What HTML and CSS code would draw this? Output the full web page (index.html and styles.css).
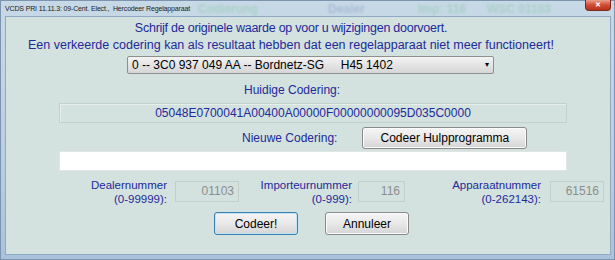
FILE: index.html
```html
<!DOCTYPE html>
<html lang="nl">
  <head>
    <meta charset="UTF-8" />
    <title>Hercodeer Regelapparaat</title>
    <link rel="stylesheet" href="styles.css">
  </head>
  <body>
    <!-- venster -->
    <div class="win">
      <!-- titelbalk -->
      <div class="titlebar">
        <span class="title">VCDS PRI 11.11.3: 09-Cent. Elect.,&nbsp; Hercodeer Regelapparaat</span>
        <span class="ghost g1">Codierung</span>
        <span class="ghost g2">Dealer</span>
        <span class="ghost g3">Imp: 116</span>
        <span class="ghost g4">WSC 01103</span>
        <span class="close">&#x2715;</span>
      </div>

      <!-- inhoud -->
      <div class="client">
        <p class="msg m1">Schrijf de originele waarde op voor u wijzigingen doorvoert.</p>
        <p class="msg m2">Een verkeerde codering kan als resultaat hebben dat een regelapparaat niet meer functioneert!</p>

        <div class="select">
          <span>0 -- 3C0 937 049 AA -- Bordnetz-SG&nbsp;&nbsp;&nbsp;&nbsp; H45 1402</span>
          <span class="arrow">&#9662;</span>
        </div>

        <p class="lbl cur">Huidige Codering:</p>
        <div class="codebox">05048E0700041A00400A00000F00000000095D035C0000</div>

        <div class="newrow">
          <span class="lbl">Nieuwe Codering:</span>
          <button class="btn helper">Codeer Hulpprogramma</button>
        </div>
        <div class="input"></div>

        <!-- nummers -->
        <div class="nums">
          <div class="num dealer">
            <span class="lbl">Dealernummer<br>(0-99999):</span>
            <span class="val v1">01103</span>
          </div>
          <div class="num imp">
            <span class="lbl">Importeurnummer<br>(0-999):</span>
            <span class="val v2">116</span>
          </div>
          <div class="num app">
            <span class="lbl">Apparaatnummer<br>(0-262143):</span>
            <span class="val v3">61516</span>
          </div>
        </div>

        <div class="actions">
          <button class="btn ok">Codeer!</button>
          <button class="btn cancel">Annuleer</button>
        </div>
      </div>
    </div>
  </body>
</html>
```

FILE: styles.css
```css
html,
body {
  margin: 0;
  padding: 0;
  overflow: hidden;
}
body {
  width: 615px;
  height: 260px;
  font-family: "Liberation Sans", Arial, sans-serif;
}

/* venster (glas) */
.win {
  width: 615px;
  height: 260px;
  box-sizing: border-box;
  background: linear-gradient(to bottom, #c7d9e6, #b9cfe2 60%, #a9c3dc);
  border: 1px solid #7d94ae;
  padding: 0 3px 4px 4px;
  display: flex;
  flex-direction: column;
}

/* titelbalk */
.titlebar {
  position: relative;
  height: 15px;
  display: flex;
  align-items: flex-start;
}
.title {
  font-size: 7px;
  letter-spacing: -0.15px;
  color: #1b1b1b;
  padding-top: 4px;
  position: relative;
  z-index: 1;
}
/* vage tekst achter het glas */
.ghost {
  position: absolute;
  top: 1px;
  font-size: 12px;
  font-weight: bold;
  color: #8cc6a8;
  opacity: 0.5;
  filter: blur(0.8px);
}
.g1 { left: 193px; }
.g2 { left: 323px; color: #8aa0c8; }
.g3 { left: 413px; }
.g4 { left: 482px; }
.close {
  margin-left: auto;
  width: 26px;
  height: 11px;
  margin-top: -1px;
  box-sizing: border-box;
  border: 1px solid #7a2a20;
  border-top: 0;
  border-radius: 0 0 4px 4px;
  background: linear-gradient(to bottom, #e8a08e, #cf4b33 50%, #b8321c);
  color: #fff;
  font-size: 7px;
  font-weight: bold;
  text-align: center;
  line-height: 10px;
}

/* inhoudsvlak */
.client {
  flex: 1;
  background: #d3e1df;
  border: 1px solid #8fa9c6;
  color: #222a9a;
  font-size: 12px;
}
.client p {
  margin: 0;
}
.msg {
  font-size: 12.5px;
  line-height: 17px;
  text-align: center;
  width: 570px;
}
.m1 {
  margin-top: 3px !important;
  letter-spacing: -0.25px;
}

/* keuzelijst */
.select {
  margin: 2px 0 0 121px;
  width: 367px;
  height: 18px;
  box-sizing: border-box;
  border: 1px solid #8e8f8f;
  border-radius: 2px;
  background: linear-gradient(to bottom, #f4f4f4, #e4e4e4 50%, #d6d6d6);
  color: #000;
  font-size: 12px;
  line-height: 16px;
  padding-left: 4px;
  display: flex;
}
.arrow {
  margin-left: auto;
  margin-right: 4px;
  font-size: 8px;
}

.lbl {
  color: #222a9a;
}
.cur {
  margin: 9px 0 0 238px !important;
  line-height: 14px;
}
.codebox {
  margin: 6px 0 0 53px;
  width: 508px;
  height: 20px;
  box-sizing: border-box;
  border: 1px solid #c4d0ce;
  box-shadow: inset 1px 1px 0 #e6eeec;
  text-align: center;
  line-height: 18px;
}

/* nieuwe codering */
.newrow {
  margin: 4px 0 0 236px;
  display: flex;
  align-items: center;
  gap: 25px;
}
.btn {
  font-family: "Liberation Sans", Arial, sans-serif;
  font-size: 12px;
  color: #000;
  border: 1px solid #8a8a8a;
  border-radius: 3px;
  background: linear-gradient(to bottom, #f5f5f5, #e8e8e8 50%, #d5d5d5);
  box-shadow: inset 0 0 0 1px #fbfbfb;
  padding: 0;
}
.helper {
  width: 165px;
  height: 22px;
}
.input {
  margin: 2px 0 0 53px;
  width: 508px;
  height: 20px;
  background: #fff;
  border: 1px solid #dfe6e5;
  box-sizing: border-box;
}

/* nummers */
.nums {
  margin-top: 10px;
  display: flex;
  height: 23px;
}
.num {
  display: flex;
  align-items: flex-start;
}
.num .lbl {
  text-align: right;
  font-size: 11.5px;
  line-height: 14px;
  margin-top: -3px;
}
.val {
  height: 21px;
  box-sizing: border-box;
  border: 1px solid #c4ceca;
  text-align: right;
  color: #8d8d8d;
  line-height: 19px;
  padding-right: 4px;
}
.dealer { margin-left: 79px; }
.dealer .lbl { width: 82px; }
.v1 { width: 64px; margin-left: 8px; }
.imp { margin-left: 18px; }
.imp .lbl { width: 95px; }
.v2 { width: 47px; margin-left: 6px; }
.app { margin-left: 41px; }
.app .lbl { width: 95px; }
.v3 { width: 54px; margin-left: 9px; }

/* knoppen */
.actions {
  margin: 8px 0 0 208px;
  display: flex;
  gap: 27px;
}
.ok {
  width: 84px;
  height: 23px;
  border-color: #3c7fb1;
  box-shadow: inset 0 0 0 1px #bfe3f7;
}
.cancel {
  width: 84px;
  height: 23px;
}
```
